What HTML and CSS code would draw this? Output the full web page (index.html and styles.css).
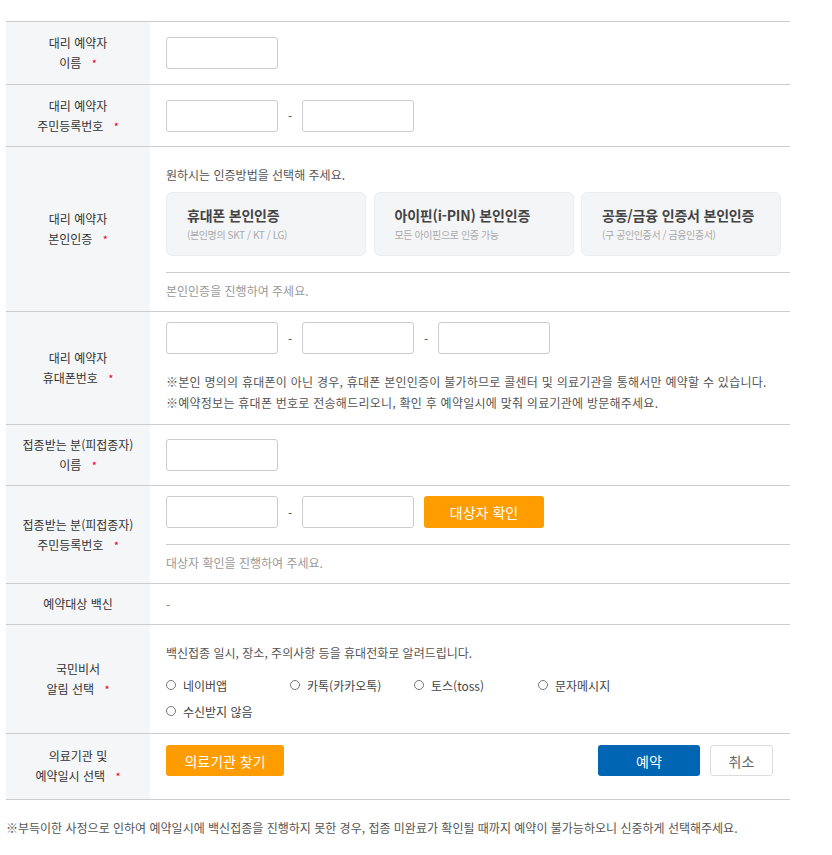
FILE: index.html
```
<!DOCTYPE html>
<html lang="ko">
<head>
    <meta charset="UTF-8">
    <meta name="viewport" content="width=device-width, initial-scale=1.0">
    <title>대리 예약</title>
    <link rel="stylesheet" href="styles.css">
</head>
<body>
    <div class="wrap">
        <table class="form-table">
            <colgroup><col class="col-label"><col></colgroup>
            <tr class="row-name">
                <th>대리 예약자<br>이름 <em class="req">*</em></th>
                <td><input type="text" class="inp"></td>
            </tr>
            <tr class="row-rrn">
                <th>대리 예약자<br>주민등록번호 <em class="req">*</em></th>
                <td>
                    <div class="inp-group">
                        <input type="text" class="inp"><span class="dash">-</span><input type="text" class="inp">
                    </div>
                </td>
            </tr>
            <tr>
                <th>대리 예약자<br>본인인증 <em class="req">*</em></th>
                <td class="top">
                    <p class="lead">원하시는 인증방법을 선택해 주세요.</p>
                    <div class="auth-cards">
                        <button type="button" class="auth-card">
                            <strong>휴대폰 본인인증</strong>
                            <span>(본인명의 SKT / KT / LG)</span>
                        </button>
                        <button type="button" class="auth-card">
                            <strong>아이핀(i-PIN) 본인인증</strong>
                            <span>모든 아이핀으로 인증 가능</span>
                        </button>
                        <button type="button" class="auth-card">
                            <strong>공동/금융 인증서 본인인증</strong>
                            <span>(구 공인인증서 / 금융인증서)</span>
                        </button>
                    </div>
                    <p class="status">본인인증을 진행하여 주세요.</p>
                </td>
            </tr>
            <tr>
                <th>대리 예약자<br>휴대폰번호 <em class="req">*</em></th>
                <td class="top">
                    <div class="inp-group">
                        <input type="text" class="inp"><span class="dash">-</span><input type="text" class="inp"><span class="dash">-</span><input type="text" class="inp">
                    </div>
                    <ul class="notes">
                        <li>※본인 명의의 휴대폰이 아닌 경우, 휴대폰 본인인증이 불가하므로 콜센터 및 의료기관을 통해서만 예약할 수 있습니다.</li>
                        <li>※예약정보는 휴대폰 번호로 전송해드리오니, 확인 후 예약일시에 맞춰 의료기관에 방문해주세요.</li>
                    </ul>
                </td>
            </tr>
            <tr class="row-target">
                <th>접종받는 분(피접종자)<br>이름 <em class="req">*</em></th>
                <td><input type="text" class="inp"></td>
            </tr>
            <tr>
                <th>접종받는 분(피접종자)<br>주민등록번호 <em class="req">*</em></th>
                <td class="top">
                    <div class="inp-group">
                        <input type="text" class="inp"><span class="dash">-</span><input type="text" class="inp">
                        <button type="button" class="btn btn-orange btn-check">대상자 확인</button>
                    </div>
                    <p class="status">대상자 확인을 진행하여 주세요.</p>
                </td>
            </tr>
            <tr class="row-vaccine">
                <th>예약대상 백신</th>
                <td class="plain">-</td>
            </tr>
            <tr>
                <th>국민비서<br>알림 선택 <em class="req">*</em></th>
                <td class="top">
                    <p class="lead lead-alarm">백신접종 일시, 장소, 주의사항 등을 휴대전화로 알려드립니다.</p>
                    <div class="radios">
                        <label><input type="radio" name="alarm"> 네이버앱</label>
                        <label><input type="radio" name="alarm"> 카톡(카카오톡)</label>
                        <label><input type="radio" name="alarm"> 토스(toss)</label>
                        <label><input type="radio" name="alarm"> 문자메시지</label>
                        <label><input type="radio" name="alarm"> 수신받지 않음</label>
                    </div>
                </td>
            </tr>
            <tr class="row-actions">
                <th>의료기관 및<br>예약일시 선택 <em class="req">*</em></th>
                <td class="top">
                    <div class="actions">
                        <button type="button" class="btn btn-orange btn-find">의료기관 찾기</button>
                        <div class="actions-right">
                            <button type="button" class="btn btn-blue">예약</button>
                            <button type="button" class="btn btn-line">취소</button>
                        </div>
                    </div>
                </td>
            </tr>
        </table>

        <p class="foot-note">※부득이한 사정으로 인하여 예약일시에 백신접종을 진행하지 못한 경우, 접종 미완료가 확인될 때까지 예약이 불가능하오니 신중하게 선택해주세요.</p>
    </div>
</body>
</html>
```

FILE: styles.css
```
*,
*::before,
*::after {
    box-sizing: border-box;
}

body {
    margin: 0;
    background: #fff;
    color: #333;
    font-family: "Noto Sans CJK KR", "Noto Sans", sans-serif;
    font-size: 12px;
}

p,
ul {
    margin: 0;
    padding: 0;
    list-style: none;
}

button,
input {
    font-family: inherit;
}

.wrap {
    width: 784px;
    margin-left: 6px;
    padding-top: 21px;
}

.form-table {
    width: 100%;
    border-collapse: collapse;
    border-top: 1px solid #ccc;
}

.form-table tr {
    border-bottom: 1px solid #ccc;
}

.col-label {
    width: 144px;
}

.form-table th {
    padding: 11px 6px;
    background: #f5f6f8;
    color: #333;
    font-weight: normal;
    font-size: 12px;
    line-height: 20px;
    text-align: center;
    vertical-align: middle;
}

.row-rrn th {
    padding: 11px 6px 10px;
}

.row-target th {
    padding: 10px 6px;
}

.row-vaccine th {
    padding: 10px 6px;
}

.row-actions th {
    padding: 12px 6px 13px;
}

.form-table td {
    padding: 0 0 0 16px;
    vertical-align: middle;
}

.form-table td.top {
    vertical-align: top;
    padding-top: 10px;
    padding-bottom: 10px;
}

.req {
    margin-left: 7px;
    color: #e60023;
    font-style: normal;
    font-size: 11px;
}

.inp {
    display: block;
    width: 112px;
    height: 32px;
    padding: 0 8px;
    border: 1px solid #ccc;
    border-radius: 3px;
    background: #fff;
}

.inp-group {
    display: flex;
    align-items: center;
}

.dash {
    width: 24px;
    text-align: center;
    color: #555;
}

.lead {
    margin-top: 8px;
    color: #555;
    line-height: 20px;
}

.auth-cards {
    display: grid;
    grid-template-columns: repeat(3, 200px);
    gap: 7.5px;
    margin-top: 7px;
}

.auth-card {
    display: flex;
    flex-direction: column;
    align-items: flex-start;
    height: 64px;
    padding: 12px 20px 0;
    border: 1px solid #ebedf0;
    border-radius: 6px;
    background: #f4f5f7;
    text-align: left;
    cursor: pointer;
}

.auth-card strong {
    color: #444;
    font-size: 14px;
    line-height: 20px;
    letter-spacing: -0.2px;
}

.auth-card span {
    margin-top: 2px;
    color: #aaa;
    font-size: 10px;
    line-height: 16px;
    letter-spacing: -0.4px;
}

.status {
    margin-top: 16px;
    padding-top: 8px;
    border-top: 1px solid #ccc;
    color: #999;
    line-height: 20px;
}

.notes {
    margin-top: 17px;
    margin-bottom: 1px;
    color: #555;
    line-height: 21px;
    letter-spacing: 0.25px;
}

.btn {
    height: 32px;
    border: 0;
    border-radius: 3px;
    font-size: 14px;
    cursor: pointer;
}

.btn-orange {
    background: #ff9c00;
    color: #fff;
}

.btn-check {
    width: 120px;
    margin-left: 10px;
}

.btn-find {
    width: 118px;
    height: 31px;
}

.btn-blue {
    width: 102px;
    height: 31px;
    background: #0066b3;
    color: #fff;
}

.btn-line {
    width: 63px;
    height: 31px;
    border: 1px solid #ddd;
    background: #fff;
    color: #666;
}

.plain {
    color: #777;
}

.lead-alarm {
    margin-top: 8px;
}

.radios {
    display: grid;
    grid-template-columns: repeat(4, 124px);
    margin-top: 9px;
    margin-bottom: -1px;
}

.radios label {
    display: flex;
    align-items: center;
    gap: 7px;
    height: 26px;
    color: #444;
    font-size: 12px;
}

.radios input {
    appearance: none;
    width: 10px;
    height: 10px;
    margin: 0;
    border: 1px solid #777;
    border-radius: 50%;
    background: #fff;
}

.actions {
    display: flex;
    justify-content: space-between;
    padding-top: 1px;
    padding-right: 17px;
}

.actions-right {
    display: flex;
    gap: 10px;
}

.foot-note {
    margin-top: 18px;
    color: #555;
    font-size: 12px;
    line-height: 20px;
}
```
